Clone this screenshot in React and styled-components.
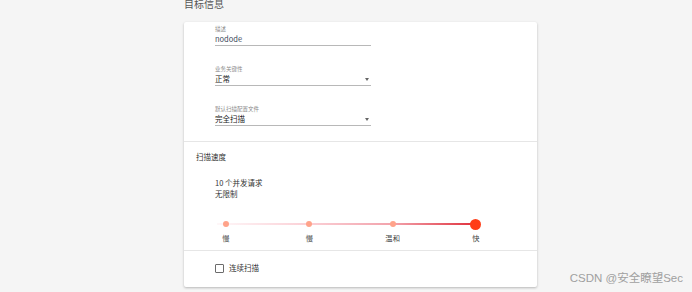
import React from 'react';
import styled, { createGlobalStyle } from 'styled-components';

const GlobalStyle = createGlobalStyle`
  html, body {
    margin: 0;
    padding: 0;
    background: #f5f5f5;
    font-family: "Noto Sans CJK SC", "Noto Sans", sans-serif;
    overflow: hidden;
  }
`;

const Page = styled.div`
  position: relative;
  width: 692px;
  height: 292px;
  padding-left: 184px;
  box-sizing: border-box;
`;

const Title = styled.div`
  margin-top: -2px;
  height: 12px;
  font-size: 10px;
  line-height: 12px;
  color: #555;
`;

const Card = styled.div`
  margin-top: 12px;
  width: 353px;
  height: 265px;
  background: #fff;
  border-radius: 2px;
  box-shadow: 0 1px 3px rgba(0, 0, 0, 0.16), 0 1px 2px rgba(0, 0, 0, 0.1);
  display: flex;
  flex-direction: column;
`;

const Section = styled.div`
  padding: ${p => p.$pad};
  border-top: ${p => (p.$divided ? '1px solid #e6e6e6' : 'none')};
`;

const Fields = styled.div`
  display: flex;
  flex-direction: column;
  gap: 19px;
  width: 156px;
`;

const Field = styled.div`
  display: flex;
  flex-direction: column;
  border-bottom: 1px solid #b8b8b8;
`;

const FieldLabel = styled.div`
  font-size: 5.5px;
  line-height: 8px;
  color: #8a8a8a;
`;

const FieldValue = styled.div`
  display: flex;
  align-items: center;
  justify-content: space-between;
  font-size: 7.5px;
  line-height: 12px;
  color: ${p => (p.$muted ? '#3d4a5c' : '#222')};
`;

const Caret = styled.span`
  width: 0;
  height: 0;
  margin-right: 2px;
  border-left: 2.5px solid transparent;
  border-right: 2.5px solid transparent;
  border-top: 3px solid #666;
`;

const Heading = styled.div`
  font-size: 7.5px;
  line-height: 10px;
  color: #333;
`;

const SpeedText = styled.div`
  margin-top: 15px;
  padding-left: 19px;
  font-size: 7.5px;
  line-height: 11px;
  color: #333;
`;

const Slider = styled.div`
  margin: 19px 0 0 20px;
  width: 270px;
  display: flex;
  justify-content: space-between;
  position: relative;

  &::before {
    content: '';
    position: absolute;
    left: 1px;
    right: 10px;
    top: 5px;
    height: 2px;
    background: linear-gradient(
      to right,
      rgba(250, 200, 210, 0.15) 0%,
      #fbd0d6 35%,
      #f2a2ab 68%,
      #e0303c 100%
    );
  }
`;

const Stop = styled.div`
  width: 20px;
  display: flex;
  flex-direction: column;
  align-items: center;
  position: relative;
`;

const DotBox = styled.div`
  height: 12px;
  display: flex;
  align-items: center;
  justify-content: center;
`;

const Dot = styled.span`
  width: ${p => (p.$active ? 11 : 6)}px;
  height: ${p => (p.$active ? 11 : 6)}px;
  border-radius: 50%;
  background: ${p => (p.$active ? '#ff3d17' : '#ffa38a')};
`;

const StopLabel = styled.div`
  margin-top: 3px;
  font-size: 7.3px;
  line-height: 10px;
  color: #444;
  white-space: nowrap;
`;

const CheckRow = styled.label`
  display: flex;
  align-items: center;
  gap: 5px;
  font-size: 7.5px;
  line-height: 10px;
  color: #333;
`;

const Box = styled.span`
  width: 7px;
  height: 7px;
  border: 1px solid #6b6b6b;
  border-radius: 1px;
`;

const Watermark = styled.div`
  position: absolute;
  right: 9px;
  bottom: 5px;
  font-size: 11.5px;
  line-height: 14px;
  color: #a0a0a0;
  font-family: "Liberation Sans", "Noto Sans CJK SC", sans-serif;
`;

const fields = [
  { label: '描述', value: 'nodode', muted: true },
  { label: '业务关键性', value: '正常', select: true },
  { label: '默认扫描配置文件', value: '完全扫描', select: true },
];

const stops = ['慢', '慢', '温和', '快'];

export default function App() {
  return (
    <>
      <GlobalStyle />
      <Page>
        <Title>目标信息</Title>
        <Card>
          <Section $pad="3px 0 15px 31px">
            <Fields>
              {fields.map(f => (
                <Field key={f.label}>
                  <FieldLabel>{f.label}</FieldLabel>
                  <FieldValue $muted={f.muted}>
                    {f.value}
                    {f.select && <Caret />}
                  </FieldValue>
                </Field>
              ))}
            </Fields>
          </Section>

          <Section $divided $pad="10px 0 7px 12px">
            <Heading>扫描速度</Heading>
            <SpeedText>
              10 个并发请求
              <br />
              无限制
            </SpeedText>
            <Slider>
              {stops.map((s, i) => (
                <Stop key={i}>
                  <DotBox>
                    <Dot $active={i === stops.length - 1} />
                  </DotBox>
                  <StopLabel>{s}</StopLabel>
                </Stop>
              ))}
            </Slider>
          </Section>

          <Section $divided $pad="12px 0 0 31px">
            <CheckRow>
              <Box />
              连续扫描
            </CheckRow>
          </Section>
        </Card>
        <Watermark>CSDN @安全瞭望Sec</Watermark>
      </Page>
    </>
  );
}
